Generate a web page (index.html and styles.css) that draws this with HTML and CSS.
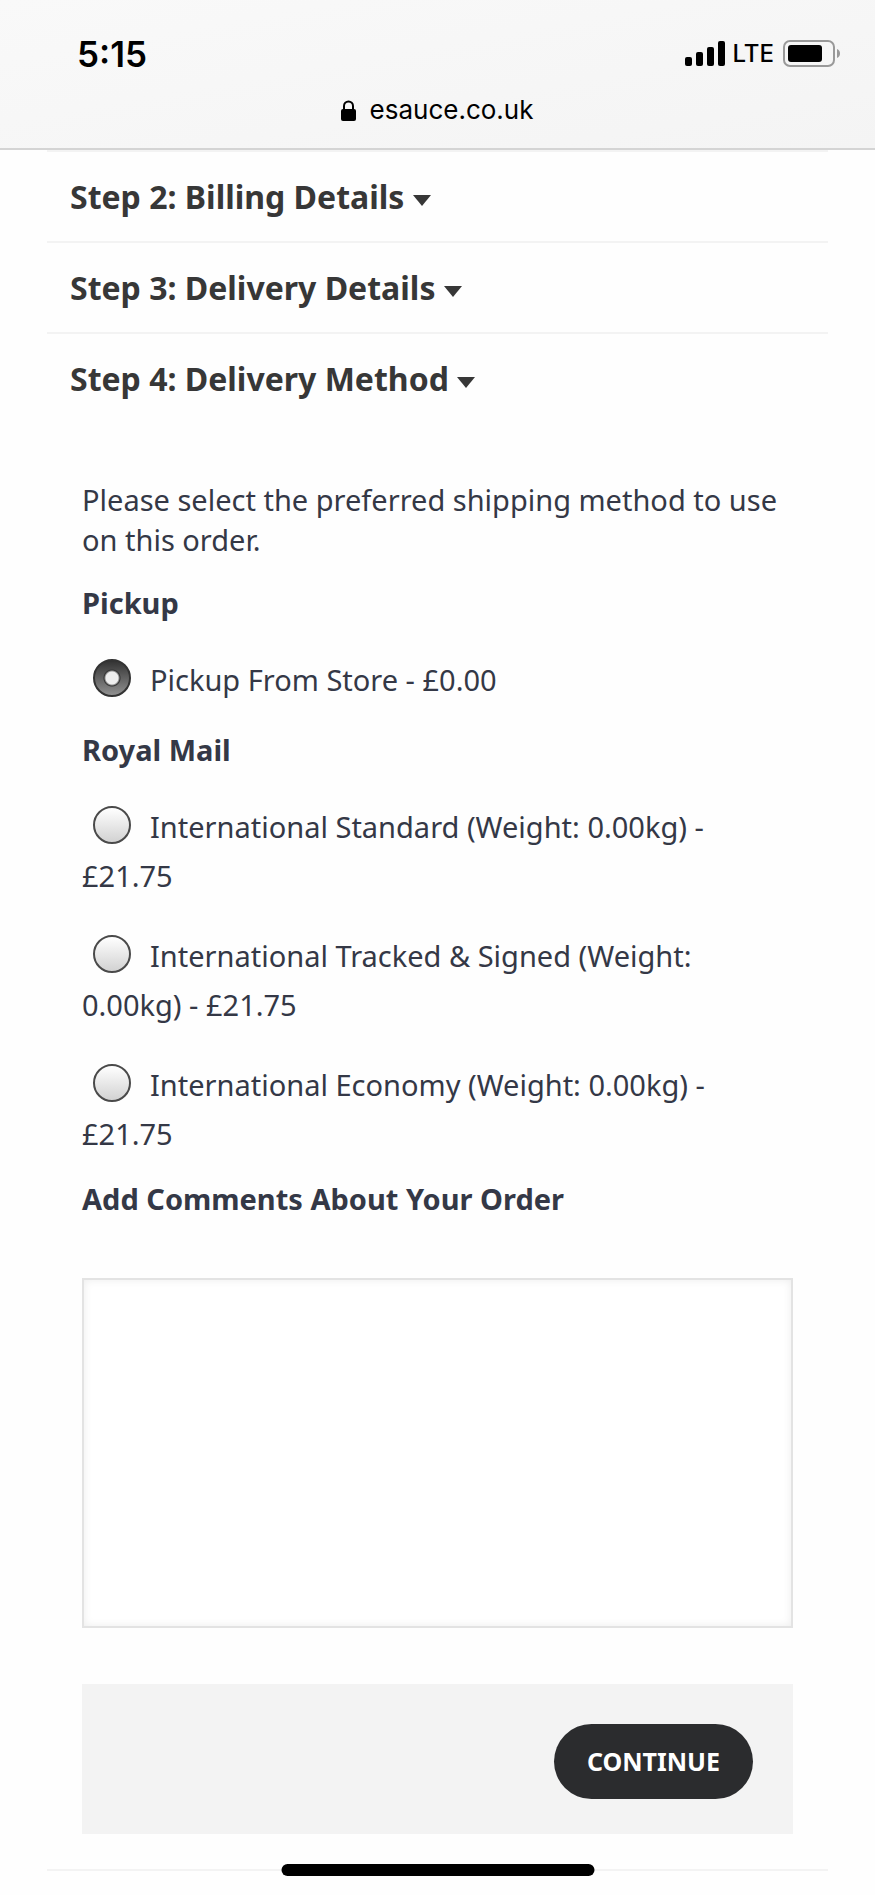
FILE: index.html
```
<!DOCTYPE html>
<html lang="en">
<head>
    <meta charset="UTF-8">
    <meta name="viewport" content="width=device-width, initial-scale=1.0">
    <title>Checkout</title>
    <link rel="stylesheet" href="styles.css">
</head>
<body>
    <header class="browser-bar">
        <div class="status">
            <span class="time">5:15</span>
            <div class="status-icons">
                <svg class="signal" width="40" height="26" viewBox="0 0 40 26">
                    <rect x="0" y="16" width="7" height="9" rx="2"/>
                    <rect x="11" y="11" width="7" height="14" rx="2"/>
                    <rect x="22" y="6" width="7" height="19" rx="2"/>
                    <rect x="33" y="0" width="7" height="25" rx="2"/>
                </svg>
                <span class="network">LTE</span>
                <svg class="battery" width="58" height="28" viewBox="0 0 58 28">
                    <rect x="1" y="1" width="50" height="25" rx="6" fill="none" stroke="#999" stroke-width="2"/>
                    <rect x="5" y="5" width="34" height="17" rx="3"/>
                    <path d="M54 9c4 1 4 8 0 9z" fill="#999"/>
                </svg>
            </div>
        </div>
        <div class="address">
            <svg width="15" height="21" viewBox="0 0 15 21">
                <path d="M3 10V6a4.500 4.500 0 0 1 9 0v4" fill="none" stroke="#000" stroke-width="2"/>
                <rect x="0" y="9" width="15" height="12" rx="2"/>
            </svg>
            <span>esauce.co.uk</span>
        </div>
    </header>

    <main class="checkout">
        <h4 class="step"><a href="#billing">Step 2: Billing Details <span class="caret"></span></a></h4>
        <h4 class="step"><a href="#delivery">Step 3: Delivery Details <span class="caret"></span></a></h4>
        <h4 class="step"><a href="#method">Step 4: Delivery Method <span class="caret"></span></a></h4>

        <form class="panel" id="method">
            <p>Please select the preferred shipping method to use on this order.</p>
            <p><strong>Pickup</strong></p>
            <div class="radio">
                <label><input type="radio" name="shipping" value="pickup" checked>Pickup From Store - £0.00</label>
            </div>
            <p><strong>Royal Mail</strong></p>
            <div class="radio">
                <label><input type="radio" name="shipping" value="standard">International Standard (Weight: 0.00kg) - £21.75</label>
            </div>
            <div class="radio">
                <label><input type="radio" name="shipping" value="tracked">International Tracked &amp; Signed (Weight: 0.00kg) - £21.75</label>
            </div>
            <div class="radio">
                <label><input type="radio" name="shipping" value="economy">International Economy (Weight: 0.00kg) - £21.75</label>
            </div>
            <label class="comments-label" for="comments">Add Comments About Your Order</label>
            <textarea id="comments" name="comment"></textarea>
            <div class="buttons">
                <button type="button">Continue</button>
            </div>
        </form>
        <div class="next-step"></div>
    </main>
    <div class="home-indicator"></div>
</body>
</html>
```
FILE: styles.css
```
* {
    box-sizing: border-box;
}
body {
    margin: 0;
    background: #fefefe;
    color: #343846;
    font-family: "Noto Sans", sans-serif;
    font-size: 29px;
    line-height: 40px;
}
.browser-bar {
    height: 150px;
    padding: 32px 34px 0 77px;
    background: linear-gradient(170deg, #f9f9f9, #f4f4f4);
    border-bottom: 2px solid #d4d4d4;
    color: #000;
    font-family: Inter, sans-serif;
}
.status {
    display: flex;
    justify-content: space-between;
    align-items: center;
    height: 44px;
}
.time {
    font-size: 35px;
    font-weight: 600;
}
.status-icons {
    display: flex;
    align-items: center;
}
.network {
    margin: 0 9px 0 8px;
    font-size: 24px;
    font-weight: 500;
}
.address {
    display: flex;
    justify-content: center;
    align-items: center;
    gap: 14px;
    margin: 14px 44px 0 0;
    font-size: 26px;
}
.checkout {
    padding: 0 47px;
}
.step {
    margin: 0;
    padding: 24px 23px;
    border-top: 2px solid #f3f3f3;
    font-size: 32px;
    line-height: 41px;
}
.step a {
    color: #373737;
    text-decoration: none;
}
.caret {
    display: inline-block;
    border-top: 11px solid;
    border-left: 9px solid transparent;
    border-right: 9px solid transparent;
    vertical-align: 3px;
}
.panel {
    padding: 57px 35px 35px;
}
.panel p {
    margin: 0 0 23px;
}
.panel .radio + p {
    margin-top: -5px;
}
.radio {
    margin: 32px 0 31px;
    line-height: 49px;
}
.radio + .radio {
    margin-top: 0;
}
input[type="radio"] {
    appearance: none;
    width: 38px;
    height: 38px;
    margin: 0 19px 0 11px;
    border: 2px solid #4a4a4a;
    border-radius: 50%;
    background: linear-gradient(#fff, #d2d2d2);
    vertical-align: -6px;
}
input[type="radio"]:checked {
    border-color: #333;
    background:
        radial-gradient(circle, #eee 6px, #333 8px, transparent 9px),
        linear-gradient(#333, #909090);
}
.comments-label {
    display: block;
    margin-top: -10px;
    font-weight: bold;
}
textarea {
    display: block;
    width: 100%;
    height: 350px;
    margin-top: 59px;
    padding: 12px;
    border: 2px solid #e3e3e3;
    background: #fff;
    box-shadow: inset 0 0 8px rgba(0, 0, 0, 0.08);
    font: inherit;
    resize: none;
}
.buttons {
    display: flex;
    justify-content: flex-end;
    margin-top: 56px;
    padding: 40px 40px 35px;
    background: #f3f3f3;
}
button {
    padding: 17px 33px 18px;
    border: none;
    border-radius: 38px;
    background: #2b2c2e;
    color: #fff;
    font: bold 25px/40px "Noto Sans", sans-serif;
    text-transform: uppercase;
}
.next-step {
    border-top: 2px solid #f3f3f3;
}
/* floats over the bottom edge of the page */
.home-indicator {
    position: fixed;
    bottom: 19px;
    left: 50%;
    width: 313px;
    height: 12px;
    border-radius: 6px;
    background: #000;
    transform: translateX(-50%);
}
```
